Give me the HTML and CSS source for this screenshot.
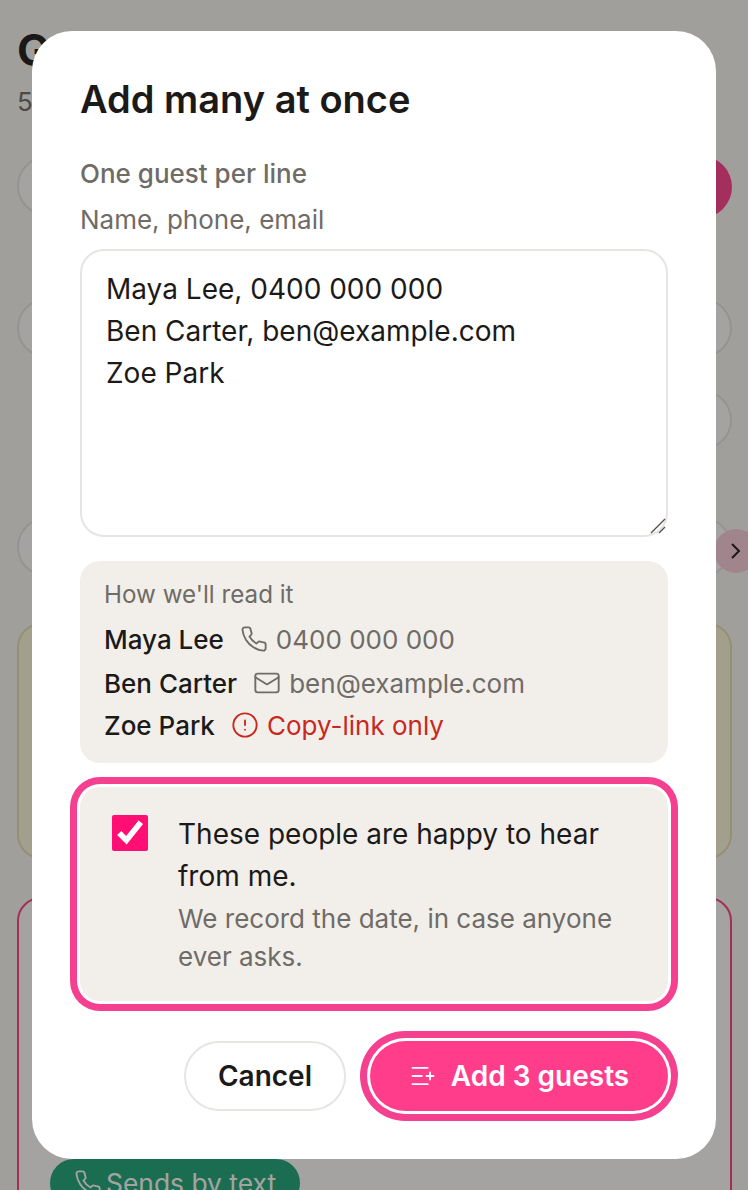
FILE: index.html
```html
<!DOCTYPE html>
<html lang="en">
<head>
    <meta charset="UTF-8">
    <meta name="viewport" content="width=device-width, initial-scale=1.0">
    <title>Add many at once</title>
    <link rel="stylesheet" href="styles.css">
</head>
<body>
<svg class="icon-defs" width="0" height="0">
    <symbol id="icon-phone" viewBox="0 0 24 24">
        <path d="M22 16.92v3a2 2 0 0 1-2.18 2 19.79 19.79 0 0 1-8.63-3.07 19.5 19.5 0 0 1-6-6 19.79 19.79 0 0 1-3.07-8.67A2 2 0 0 1 4.11 2h3a2 2 0 0 1 2 1.72 12.84 12.84 0 0 0 .7 2.81 2 2 0 0 1-.45 2.11L8.09 9.91a16 16 0 0 0 6 6l1.27-1.27a2 2 0 0 1 2.11-.45 12.84 12.84 0 0 0 2.81.7A2 2 0 0 1 22 16.92z"/>
    </symbol>
    <symbol id="icon-mail" viewBox="0 0 24 24">
        <rect x="2" y="4" width="20" height="16" rx="2"/>
        <path d="m22 7-8.97 5.7a1.94 1.94 0 0 1-2.06 0L2 7"/>
    </symbol>
    <symbol id="icon-alert" viewBox="0 0 24 24">
        <circle cx="12" cy="12" r="10"/>
        <path d="M12 8v4"/>
        <path d="M12 16h.01"/>
    </symbol>
    <symbol id="icon-list-plus" viewBox="0 0 24 24">
        <path d="M16 5H3"/>
        <path d="M11 12H3"/>
        <path d="M16 19H3"/>
        <path d="M18 9v6"/>
        <path d="M21 12h-6"/>
    </symbol>
</svg>

<!-- page behind the dialog -->
<main class="page">
    <h1 class="page-title">Guests</h1>
    <p class="page-count">5 guests</p>

    <div class="add-row">
        <div class="field"></div>
        <div class="round-btn"></div>
    </div>
    <div class="field field-wide"></div>
    <div class="field field-end"></div>
    <div class="field field-wide field-last">
        <span class="chevron">
            <svg viewBox="0 0 24 24"><path d="m9 5 7 7-7 7"/></svg>
        </span>
    </div>

    <div class="note-card"></div>
    <div class="guest-card">
        <span class="sends-pill">
            <svg class="icon"><use href="#icon-phone"/></svg>
            Sends by text
        </span>
    </div>
</main>

<div class="overlay">
    <div class="dialog">
        <h2>Add many at once</h2>

        <label class="field-label" for="guestLines">One guest per line</label>
        <p class="field-hint">Name, phone, email</p>
        <div class="lines-wrap">
            <textarea id="guestLines" class="guest-lines">Maya Lee, 0400 000 000
Ben Carter, ben@example.com
Zoe Park</textarea>
            <svg class="grip" viewBox="0 0 16 16"><path d="M1 15 15 1M9 15l6-6"/></svg>
        </div>

        <div class="preview">
            <div class="preview-title">How we'll read it</div>
            <div class="preview-row">
                <span class="preview-name">Maya Lee</span>
                <svg class="icon"><use href="#icon-phone"/></svg>
                <span>0400 000 000</span>
            </div>
            <div class="preview-row">
                <span class="preview-name">Ben Carter</span>
                <svg class="icon"><use href="#icon-mail"/></svg>
                <span>ben@example.com</span>
            </div>
            <div class="preview-row preview-warn">
                <span class="preview-name">Zoe Park</span>
                <svg class="icon"><use href="#icon-alert"/></svg>
                <span>Copy-link only</span>
            </div>
        </div>

        <label class="consent">
            <input type="checkbox" checked>
            <span>
                <span class="consent-text">These people are happy to hear from me.</span>
                <span class="consent-sub">We record the date, in case anyone ever asks.</span>
            </span>
        </label>

        <div class="actions">
            <button class="btn-cancel">Cancel</button>
            <button class="btn-add">
                <svg class="icon"><use href="#icon-list-plus"/></svg>
                Add 3 guests
            </button>
        </div>
    </div>
</div>
</body>
</html>
```

FILE: styles.css
```css
* {
    box-sizing: border-box;
}

body {
    margin: 0;
    height: 1190px;
    overflow: hidden;
    position: relative;
    font-family: 'Inter', sans-serif;
    color: #1c1a18;
    background-color: #fbf9f6;
}

.icon-defs {
    position: absolute;
}

.icon {
    width: 28px;
    height: 28px;
    flex: none;
    fill: none;
    stroke: currentColor;
    stroke-width: 1.6;
    stroke-linecap: round;
    stroke-linejoin: round;
}

/* page behind */
.page {
    padding: 24px 16px 0 17px;
}

.page-title {
    margin: 0;
    font-size: 44px;
    line-height: 52px;
    font-weight: 700;
}

.page-count {
    margin: 8px 0 0;
    font-size: 26px;
    line-height: 36px;
    color: #6f6b66;
}

.add-row {
    display: flex;
    gap: 20px;
    margin-top: 36px;
}

.add-row .field {
    flex: 1;
}

.field {
    height: 60px;
    border: 2px solid #e7e5e2;
    border-radius: 30px;
    background-color: #fff;
}

.field-wide {
    margin-top: 80px;
}

.field-end {
    margin: 32px 0 0 300px;
}

.field-wide.field-last {
    margin-top: 67px;
    position: relative;
}

.round-btn {
    width: 62px;
    height: 62px;
    border-radius: 50%;
    background-color: #ff3d8b;
}

.chevron {
    position: absolute;
    right: -28px;
    top: 10px;
    width: 44px;
    height: 44px;
    border-radius: 50%;
    background-color: #f9cddd;
    display: flex;
    align-items: center;
    padding-left: 9px;
}

.chevron svg {
    width: 24px;
    height: 24px;
    fill: none;
    stroke: #1c1a18;
    stroke-width: 2;
}

.note-card {
    height: 236px;
    margin-top: 46px;
    border: 2px solid #e6dfb4;
    border-radius: 24px;
    background-color: #fdf8dc;
}

.guest-card {
    height: 340px;
    margin-top: 38px;
    padding: 260px 0 0 31px;
    border: 2px solid #ff3d7f;
    border-radius: 24px;
    background-color: #fff;
}

.sends-pill {
    display: inline-flex;
    align-items: center;
    gap: 4px;
    height: 48px;
    padding: 0 24px;
    border-radius: 24px;
    background-color: #1aa578;
    color: #fff;
    font-size: 26.4px;
}

/* dialog */
.overlay {
    position: absolute;
    inset: 0;
    padding: 31px 32px;
    background-color: rgba(28, 25, 23, 0.4);
}

.dialog {
    height: 1128px;
    padding: 48px;
    border-radius: 40px;
    background-color: #fff;
}

.dialog h2 {
    margin: 0;
    font-size: 38px;
    line-height: 40px;
    font-weight: 600;
}

.field-label {
    display: block;
    margin-top: 38px;
    font-size: 26px;
    line-height: 34px;
    font-weight: 500;
    color: #6f6b66;
}

.field-hint {
    margin: 12px 0 12px;
    font-size: 26px;
    line-height: 34px;
    color: #6f6b66;
}

.lines-wrap {
    position: relative;
}

.guest-lines {
    display: block;
    width: 100%;
    height: 288px;
    padding: 17px 24px;
    border: 2px solid #e7e5e2;
    border-radius: 24px;
    font-family: inherit;
    font-size: 28px;
    line-height: 42px;
    color: #1c1a18;
    outline: none;
    resize: none;
}

.grip {
    position: absolute;
    right: 2px;
    bottom: 3px;
    width: 16px;
    height: 16px;
    fill: none;
    stroke: #55524e;
    stroke-width: 1.4;
}

.preview {
    margin-top: 24px;
    height: 202px;
    padding: 16px 24px;
    border-radius: 20px;
    background-color: #f2efeb;
    font-size: 26px;
    color: #6f6b66;
}

.preview-title {
    font-size: 24.2px;
    line-height: 36px;
}

.preview-row {
    display: flex;
    align-items: center;
    gap: 8px;
    height: 42px;
    margin-top: 2px;
}

.preview-title + .preview-row {
    margin-top: 5px;
}

.preview-name {
    font-weight: 500;
    color: #1c1a18;
    margin-right: 8px;
}

.preview-row.preview-warn {
    margin-top: 0;
    color: #c9281d;
}

.consent {
    display: flex;
    gap: 30px;
    height: 214px;
    margin-top: 24px;
    padding: 28px 32px;
    border-radius: 20px;
    background-color: #f2efeb;
    box-shadow: 0 0 0 3px #fff, 0 0 0 10px #f5408f;
}

.consent input {
    width: 36px;
    height: 36px;
    margin: 0;
    flex: none;
    accent-color: #ff0f73;
}

.consent-text {
    display: block;
    margin-top: -2px;
    font-size: 28px;
    line-height: 42px;
}

.consent-sub {
    display: block;
    font-size: 26px;
    line-height: 38px;
    color: #6f6b66;
    margin-top: 3px;
}

.actions {
    display: flex;
    justify-content: flex-end;
    gap: 24px;
    margin-top: 40px;
}

.actions button {
    height: 70px;
    border-radius: 35px;
    font-family: inherit;
    font-size: 28px;
    font-weight: 600;
    cursor: pointer;
}

.btn-cancel {
    width: 162px;
    border: 2px solid #e7e5e2;
    background-color: #fff;
    color: #1c1a18;
}

.btn-add {
    width: 298px;
    display: flex;
    align-items: center;
    justify-content: center;
    gap: 14px;
    border: none;
    background-color: #ff3d8b;
    color: #fff;
    box-shadow: 0 0 0 3px #fff, 0 0 0 10px #f5408f;
}
```
